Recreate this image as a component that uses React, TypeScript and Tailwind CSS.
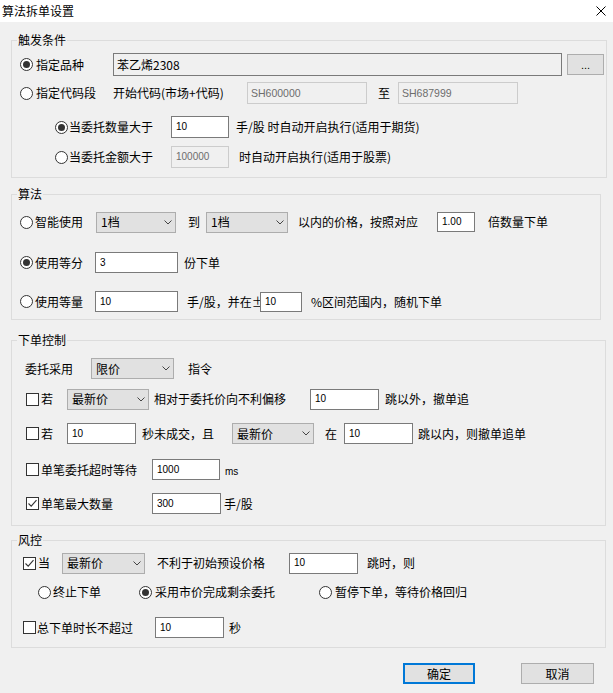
import React from "react";

const CJK = "font-['Noto_Sans_CJK_SC','Liberation_Sans',sans-serif]";
const NUM = "font-['Liberation_Sans','Noto_Sans_CJK_SC',sans-serif]";

function Radio({ checked = false, className = "" }: { checked?: boolean; className?: string }) {
  return (
    <span
      className={`shrink-0 w-[13px] h-[13px] rounded-full border border-[#333333] bg-white flex items-center justify-center ${className}`}
    >
      {checked && <span className="w-[7px] h-[7px] rounded-full bg-[#333333]" />}
    </span>
  );
}

function Check({ checked = false, className = "" }: { checked?: boolean; className?: string }) {
  return (
    <span className={`shrink-0 w-[13px] h-[13px] border border-[#333333] bg-white flex items-center justify-center ${className}`}>
      {checked && (
        <svg width="11" height="11" viewBox="0 0 11 11">
          <path d="M1.5 5.5 L4.2 8.2 L9.5 2.2" fill="none" stroke="#333333" strokeWidth="1.1" />
        </svg>
      )}
    </span>
  );
}

function Box({
  children,
  className = "",
  disabled = false,
  cjk = false,
}: {
  children?: React.ReactNode;
  className?: string;
  disabled?: boolean;
  cjk?: boolean;
}) {
  const look = disabled
    ? "border-[#cccccc] bg-[#f0f0f0] text-[#6d6d6d]"
    : "border-[#7a7a7a] bg-white text-black";
  const font = cjk ? `${CJK} text-[12px] pl-[3px]` : `${NUM} text-[10px] pl-[4px]`;
  return (
    <div className={`shrink-0 flex items-center border leading-[14px] whitespace-nowrap ${look} ${font} ${className}`}>
      {children}
    </div>
  );
}

function Select({ children, className = "" }: { children?: React.ReactNode; className?: string }) {
  return (
    <div
      className={`shrink-0 flex items-center justify-between border border-[#adadad] bg-[#e1e1e1] pl-[4px] pr-[3px] ${className}`}
    >
      <span className="whitespace-nowrap">{children}</span>
      <svg width="8" height="5" viewBox="0 0 8 5">
        <path d="M0.5 0.5 L4 4 L7.5 0.5" fill="none" stroke="#444444" strokeWidth="1" />
      </svg>
    </div>
  );
}

function Group({
  label,
  className = "",
  children,
}: {
  label: string;
  className?: string;
  children?: React.ReactNode;
}) {
  return (
    <div className={`relative ml-[11px] border border-[#dcdcdc] flex flex-col ${className}`}>
      <span className="absolute left-[5px] top-[-9px] px-[1px] bg-[#f0f0f0] leading-[16px]">{label}</span>
      {children}
    </div>
  );
}

export default function App() {
  return (
    <div className={`w-[613px] h-[693px] bg-[#f0f0f0] text-black text-[12px] leading-[16px] ${CJK} flex flex-col overflow-hidden`}>
      {/* title bar */}
      <div className="h-[22px] bg-white flex items-center shrink-0">
        <span className="pl-[2px]">算法拆单设置</span>
        <svg className="ml-auto mr-[7px]" width="10" height="10" viewBox="0 0 10 10">
          <path d="M0.5 0.5 L9.5 9.5 M9.5 0.5 L0.5 9.5" stroke="#000" strokeWidth="1" />
        </svg>
      </div>

      {/* 触发条件 */}
      <Group label="触发条件" className="mt-[18px] w-[596px] h-[138px] shrink-0">
        <div className="flex items-center h-[23px] mt-[12px]">
          <Radio checked className="ml-[8px]" />
          <span className="ml-[3px] w-[77px] shrink-0">指定品种</span>
          <Box cjk className="w-[449px] h-[23px] !bg-[#f0f0f0]">苯乙烯2308</Box>
          <div className={`shrink-0 ml-[5px] w-[37px] h-[21px] border border-[#adadad] bg-[#e1e1e1] flex items-center justify-center ${NUM} text-[11px] leading-[14px]`}>
            ...
          </div>
        </div>
        <div className="flex items-center h-[22px] mt-[6px]">
          <Radio className="ml-[8px]" />
          <span className="ml-[3px] w-[77px] shrink-0 whitespace-nowrap">指定代码段</span>
          <span className="w-[134px] shrink-0 whitespace-nowrap">开始代码(市场+代码)</span>
          <Box disabled className="w-[120px] h-[22px] !text-[10.5px] !pl-[3px]">SH600000</Box>
          <span className="ml-[11px]">至</span>
          <Box disabled className="ml-[8px] w-[120px] h-[22px] !text-[10.5px] !pl-[3px]">SH687999</Box>
        </div>
        <div className="flex items-center h-[22px] mt-[12px]">
          <Radio checked className="ml-[43px]" />
          <span className="ml-[1px] w-[102px] shrink-0 whitespace-nowrap">当委托数量大于</span>
          <Box className="w-[58px] h-[22px]">10</Box>
          <span className="ml-[7px] whitespace-nowrap">手/股 时自动开启执行(适用于期货)</span>
        </div>
        <div className="flex items-center h-[22px] mt-[8px]">
          <Radio className="ml-[43px]" />
          <span className="ml-[1px] w-[102px] shrink-0 whitespace-nowrap">当委托金额大于</span>
          <Box disabled className="w-[58px] h-[22px]">100000</Box>
          <span className="ml-[10px] whitespace-nowrap">时自动开启执行(适用于股票)</span>
        </div>
      </Group>

      {/* 算法 */}
      <Group label="算法" className="mt-[16px] w-[590px] h-[126px] shrink-0">
        <div className="flex items-center h-[22px] mt-[16px]">
          <Radio className="ml-[8px]" />
          <span className="ml-[2px] w-[61px] shrink-0">智能使用</span>
          <Select className="w-[80px] h-[21px]">1档</Select>
          <span className="ml-[12px]">到</span>
          <Select className="ml-[6px] w-[82px] h-[21px]">1档</Select>
          <span className="ml-[10px] w-[139px] shrink-0 whitespace-nowrap">以内的价格，按照对应</span>
          <Box className="w-[38px] h-[20px]">1.00</Box>
          <span className="ml-[13px] whitespace-nowrap">倍数量下单</span>
        </div>
        <div className="flex items-center h-[21px] mt-[19px]">
          <Radio checked className="ml-[8px]" />
          <span className="ml-[2px] w-[60px] shrink-0">使用等分</span>
          <Box className="w-[83px] h-[21px]">3</Box>
          <span className="ml-[6px]">份下单</span>
        </div>
        <div className="flex items-center h-[21px] mt-[18px]">
          <Radio className="ml-[8px]" />
          <span className="ml-[2px] w-[60px] shrink-0">使用等量</span>
          <Box className="w-[83px] h-[21px]">10</Box>
          <span className="ml-[9px] w-[73px] shrink-0 whitespace-nowrap">手/股，并在±</span>
          <Box className="w-[42px] h-[20px]">10</Box>
          <span className="ml-[9px] whitespace-nowrap">%区间范围内，随机下单</span>
        </div>
      </Group>

      {/* 下单控制 */}
      <Group label="下单控制" className="mt-[20px] w-[595px] h-[186px] shrink-0">
        <div className="flex items-center h-[21px] mt-[17px]">
          <span className="ml-[13px] w-[66px] shrink-0">委托采用</span>
          <Select className="w-[83px] h-[21px]">限价</Select>
          <span className="ml-[14px]">指令</span>
        </div>
        <div className="flex items-center h-[22px] mt-[9px]">
          <Check className="ml-[14px]" />
          <span className="ml-[2px] w-[26px] shrink-0">若</span>
          <Select className="w-[82px] h-[21px]">最新价</Select>
          <span className="ml-[5px] w-[156px] shrink-0 whitespace-nowrap">相对于委托价向不利偏移</span>
          <Box className="w-[69px] h-[21px]">10</Box>
          <span className="ml-[6px] whitespace-nowrap">跳以外，撤单追</span>
        </div>
        <div className="flex items-center h-[21px] mt-[13px]">
          <Check className="ml-[14px]" />
          <span className="ml-[2px] w-[26px] shrink-0">若</span>
          <Box className="w-[69px] h-[21px]">10</Box>
          <span className="ml-[6px] w-[90px] shrink-0 whitespace-nowrap">秒未成交，且</span>
          <Select className="w-[82px] h-[21px]">最新价</Select>
          <span className="ml-[11px]">在</span>
          <Box className="ml-[7px] w-[69px] h-[21px]">10</Box>
          <span className="ml-[5px] whitespace-nowrap">跳以内，则撤单追单</span>
        </div>
        <div className="flex items-center h-[21px] mt-[15px]">
          <Check className="ml-[14px]" />
          <span className="ml-[2px] w-[111px] shrink-0 whitespace-nowrap">单笔委托超时等待</span>
          <Box className="w-[68px] h-[21px]">1000</Box>
          <span className={`ml-[5px] mt-[4px] ${NUM} text-[10px]`}>ms</span>
        </div>
        <div className="flex items-center h-[21px] mt-[13px]">
          <Check checked className="ml-[14px]" />
          <span className="ml-[2px] w-[111px] shrink-0 whitespace-nowrap">单笔最大数量</span>
          <Box className="w-[69px] h-[21px]">300</Box>
          <span className="ml-[3px]">手/股</span>
        </div>
      </Group>

      {/* 风控 */}
      <Group label="风控" className="mt-[14px] w-[595px] h-[108px] shrink-0">
        <div className="flex items-center h-[22px] mt-[11px]">
          <Check checked className="ml-[11px]" />
          <span className="ml-[2px] w-[24px] shrink-0">当</span>
          <Select className="w-[83px] h-[21px]">最新价</Select>
          <span className="ml-[12px] w-[132px] shrink-0 whitespace-nowrap">不利于初始预设价格</span>
          <Box className="w-[69px] h-[21px]">10</Box>
          <span className="ml-[9px] whitespace-nowrap">跳时，则</span>
        </div>
        <div className="flex items-center h-[14px] mt-[11px]">
          <Radio className="ml-[26px]" />
          <span className="ml-[2px] w-[86px] shrink-0">终止下单</span>
          <Radio checked />
          <span className="ml-[3px] w-[164px] shrink-0 whitespace-nowrap">采用市价完成剩余委托</span>
          <Radio />
          <span className="ml-[3px] whitespace-nowrap">暂停下单，等待价格回归</span>
        </div>
        <div className="flex items-center h-[21px] mt-[18px]">
          <Check className="ml-[11px]" />
          <span className="ml-[1px] w-[118px] shrink-0 whitespace-nowrap">总下单时长不超过</span>
          <Box className="w-[69px] h-[21px]">10</Box>
          <span className="ml-[5px]">秒</span>
        </div>
      </Group>

      {/* buttons */}
      <div className="flex mt-[15px] shrink-0">
        <div className="ml-[403px] w-[72px] h-[21px] border-2 border-[#0078d7] bg-[#e1e1e1] flex items-center justify-center">
          确定
        </div>
        <div className="ml-[46px] w-[73px] h-[21px] border border-[#adadad] bg-[#e1e1e1] flex items-center justify-center">
          取消
        </div>
      </div>
    </div>
  );
}
